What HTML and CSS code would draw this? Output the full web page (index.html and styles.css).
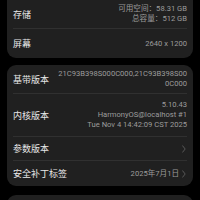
FILE: index.html
```html
<!DOCTYPE html>
<html lang="zh">
<head>
<meta charset="utf-8">
<link rel="stylesheet" href="styles.css">
</head>
<body>
<div class="page">
  <div class="card card-first">
    <div class="row r29">
      <div class="label">存储</div>
      <div class="value"><div>可用空间：58.31 GB</div><div>总容量：512 GB</div></div>
    </div>
    <div class="row r29">
      <div class="label">屏幕</div>
      <div class="value">2640 x 1200</div>
    </div>
  </div>
  <div class="card">
    <div class="row r29">
      <div class="label">基带版本</div>
      <div class="value"><div>21C93B398S000C000,21C93B398S00</div><div>0C000</div></div>
    </div>
    <div class="row r43">
      <div class="label">内核版本</div>
      <div class="value"><div>5.10.43</div><div>HarmonyOS@localhost #1</div><div>Tue Nov 4 14:42:09 CST 2025</div></div>
    </div>
    <div class="row r24">
      <div class="label">参数版本</div>
      <div class="value inline"><svg class="chev" viewBox="0 0 4 8" width="4" height="8"><path d="M0.6 0.8 L3.2 4 L0.6 7.2" fill="none" stroke="#5e5e5e" stroke-width="0.9" stroke-linecap="round" stroke-linejoin="round"/></svg></div>
    </div>
    <div class="row r25">
      <div class="label">安全补丁标签</div>
      <div class="value inline">2025年7月1日<svg class="chev" viewBox="0 0 4 8" width="4" height="8"><path d="M0.6 0.8 L3.2 4 L0.6 7.2" fill="none" stroke="#5e5e5e" stroke-width="0.9" stroke-linecap="round" stroke-linejoin="round"/></svg></div>
    </div>
  </div>
  <div class="card card-last"></div>
</div>
</body>
</html>
```
FILE: styles.css
```css
html, body {
  margin: 0;
  padding: 0;
  background: #000;
}
body {
  font-family: Roboto, "Noto Sans CJK SC", sans-serif;
  overflow: hidden;
  height: 200px;
}
.page {
  display: flex;
  flex-direction: column;
  gap: 7px;
  padding: 0 7px;
}
.card {
  background: #202020;
  border-radius: 9px;
  padding: 0 6px;
}
.card-first {
  margin-top: -12px;
  padding-top: 12px;
}
.card-last {
  height: 20px;
  margin-top: 2px;
}
.row {
  display: flex;
  align-items: center;
  justify-content: space-between;
  gap: 6px;
  border-bottom: 1px solid #303030;
  box-sizing: border-box;
}
.row:last-child {
  border-bottom: none;
}
.r29 { min-height: 29px; }
.r43 { min-height: 43px; }
.r24 { min-height: 24px; }
.r25 { min-height: 25px; }
.label {
  color: #e8e8e8;
  font-size: 9px;
  white-space: nowrap;
  font-family: "Noto Sans CJK SC", sans-serif;
}
.value {
  color: #9c9c9c;
  font-size: 7.6px;
  line-height: 10px;
  text-align: right;
  white-space: nowrap;
  display: flex;
  flex-direction: column;
  align-items: flex-end;
}
.value.inline {
  flex-direction: row;
  align-items: center;
  gap: 3px;
}
.chev {
  display: block;
  margin-right: 1px;
}
```
